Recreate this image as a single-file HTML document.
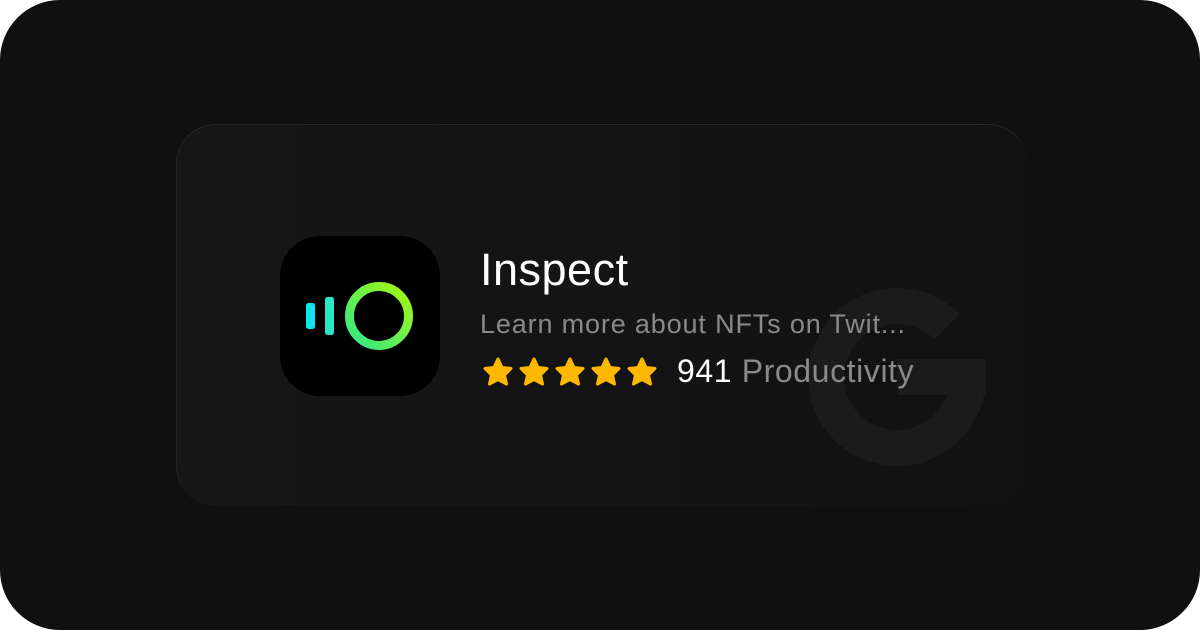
<!DOCTYPE html>
<html><head><style>
html,body{margin:0;padding:0;width:1200px;height:630px;background:#fff;overflow:hidden}
.outer{position:absolute;left:0;top:0;width:1200px;height:630px;border-radius:60px;background:#101010;overflow:hidden}
.card{position:absolute;left:176px;top:124px;width:852px;height:382px;border-radius:40px;background:linear-gradient(90deg,#161616,#131313 70%,#111 100%);border-top:1px solid #282828;border-left:1px solid #222;box-sizing:border-box}
.t{position:absolute;font-family:"Liberation Sans",sans-serif;white-space:nowrap}
</style></head><body>
<div class="outer">
<div class="card"></div>
<svg style="position:absolute;left:0;top:0" width="1200" height="630">
<circle cx="897" cy="377" r="71" fill="none" stroke="#1b1b1b" stroke-width="36" stroke-dasharray="390 500"/>
<rect x="897" y="359" width="89" height="36" fill="#1b1b1b"/>
<g fill="#ffb800" stroke="#ffb800" stroke-width="3" stroke-linejoin="round">
<path id="s" d="M498 359 L502 367.5 L511 368.5 L504.5 375 L506.5 384 L498 379.5 L489.5 384 L491.5 375 L485 368.5 L494 367.5 Z"/>
<use href="#s" x="36"/><use href="#s" x="72"/><use href="#s" x="108"/><use href="#s" x="144"/>
</g>
</svg>
<svg style="position:absolute;left:280px;top:236px" width="160" height="160">
<defs><linearGradient id="g" x1="0" y1="1" x2="1" y2="0"><stop offset="0" stop-color="#2fe88a"/><stop offset="1" stop-color="#a6f80e"/></linearGradient></defs>
<rect width="160" height="160" rx="40" fill="#000"/>
<rect x="26" y="67" width="9" height="26" rx="2.5" fill="#12e3f0"/>
<rect x="45" y="61" width="9" height="38" rx="2.5" fill="#26e8c8"/>
<circle cx="99" cy="80" r="29.5" fill="none" stroke="url(#g)" stroke-width="9"/>
</svg>
<div class="t" style="left:480px;top:244px;font-size:45px;color:#fff;letter-spacing:0.5px">Inspect</div>
<div class="t" style="left:480px;top:309px;font-size:27px;color:#8a8a8a;letter-spacing:0.85px">Learn more about NFTs on Twit...</div>
<div class="t" style="left:677px;top:353px;font-size:32px;color:#fff;letter-spacing:0.6px">941 <span style="color:#8a8a8a">Productivity</span></div>
</div>
</body></html>
